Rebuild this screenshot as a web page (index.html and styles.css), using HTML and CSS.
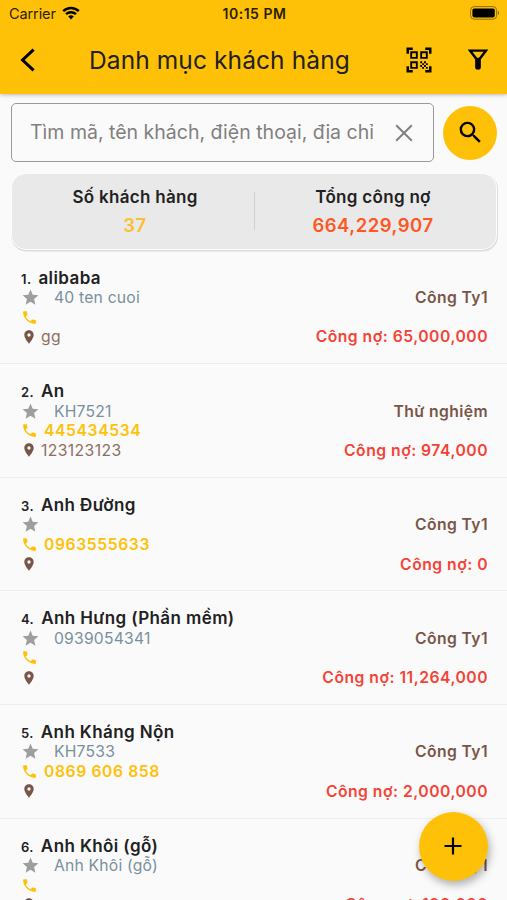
FILE: index.html
```html
<!DOCTYPE html>
<html lang="vi">
<head>
    <meta charset="UTF-8">
    <meta name="viewport" content="width=device-width, initial-scale=1.0">
    <title>Danh mục khách hàng</title>
    <link rel="stylesheet" href="styles.css">
</head>
<body>
    <svg class="sprite" aria-hidden="true">
        <symbol id="star" viewBox="0 0 24 24"><path d="M12 17.27L18.18 21l-1.64-7.03L22 9.24l-7.19-.61L12 2 9.19 8.63 2 9.24l5.46 4.73L5.82 21z"/></symbol>
        <symbol id="phone" viewBox="0 0 24 24"><path d="M20 15.5c-1.25 0-2.45-.2-3.57-.57a1 1 0 0 0-1.02.24l-2.2 2.2a15.05 15.05 0 0 1-6.59-6.59l2.2-2.21a.96.96 0 0 0 .25-1A11.36 11.36 0 0 1 8.5 4c0-.55-.45-1-1-1H4c-.55 0-1 .45-1 1 0 9.39 7.61 17 17 17 .55 0 1-.45 1-1v-3.5c0-.55-.45-1-1-1z"/></symbol>
        <symbol id="pin" viewBox="0 0 24 24"><path d="M12 2C8.13 2 5 5.13 5 9c0 5.25 7 13 7 13s7-7.75 7-13c0-3.87-3.13-7-7-7zm0 9.5a2.5 2.5 0 0 1 0-5 2.5 2.5 0 0 1 0 5z"/></symbol>
    </svg>

    <header>
        <div class="status-bar">
            <div class="carrier">
                <span>Carrier</span>
                <svg class="wifi" viewBox="0 0 18 14">
                    <path d="M1.2 5.2a11.2 11.2 0 0 1 15.6 0" />
                    <path d="M4 8.2a7.2 7.2 0 0 1 10 0" />
                    <path class="wifi-dot" d="M9 13.6l-2.8-3a4.2 4.2 0 0 1 5.6 0z" />
                </svg>
            </div>
            <div class="clock">10:15 PM</div>
            <svg class="battery" viewBox="0 0 30 14">
                <rect class="battery-case" x=".6" y=".6" width="26" height="12.6" rx="3.6" />
                <rect x="2.4" y="2.4" width="22.4" height="9" rx="1.8" />
                <path class="battery-tip" d="M27.8 4.8c1.8.6 1.8 3.6 0 4.2z" />
            </svg>
        </div>
        <div class="app-bar">
            <svg class="back" viewBox="0 0 16 24"><path d="M13.6 1.6L2.6 12l11 10.4" /></svg>
            <h1>Danh mục khách hàng</h1>
            <svg class="qr" viewBox="0 0 24 24"><path d="M9.5 6.5v3h-3v-3h3M11 5H5v6h6V5zm-1.5 9.5v3h-3v-3h3M11 13H5v6h6v-6zm6.5-6.5v3h-3v-3h3M19 5h-6v6h6V5zm-6 8h1.5v1.5H13V13zm1.5 1.5H16V16h-1.5v-1.5zM16 13h1.5v1.5H16V13zm-3 3h1.5v1.5H13V16zm1.5 1.5H16V19h-1.5v-1.5zM16 16h1.5v1.5H16V16zm1.5-1.5H19V16h-1.5v-1.5zm0 3H19V19h-1.5v-1.5zM22 7h-2V4h-3V2h5v5zm0 15v-5h-2v3h-3v2h5zM2 22h5v-2H4v-3H2v5zM2 2v5h2V4h3V2H2z"/></svg>
            <svg class="filter" viewBox="0 0 20 21"><path d="M2 1.6h16l-6.4 8.3v8.3q0 1-1 1H9.400q-1 0-1-1V9.900z" /><path d="M9 10h2v9H9z" /></svg>
        </div>
    </header>

    <div class="search-row">
        <div class="search-box">
            <input type="text" class="search-input" placeholder="Tìm mã, tên khách, điện thoại, địa chỉ">
            <svg class="clear" viewBox="0 0 18 18"><path d="M1.2 1.2l15.6 15.6M16.8 1.2L1.2 16.8" /></svg>
        </div>
        <button class="search-button" aria-label="Tìm">
            <svg viewBox="0 0 24 24"><path d="M15.5 14h-.79l-.28-.27A6.47 6.47 0 0 0 16 9.5 6.5 6.5 0 1 0 9.5 16c1.61 0 3.09-.59 4.23-1.57l.27.28v.79l5 4.99L20.49 19l-4.99-5zm-6 0C7.01 14 5 11.99 5 9.5S7.01 5 9.5 5 14 7.01 14 9.5 11.99 14 9.5 14z"/></svg>
        </button>
    </div>

    <div class="summary">
        <div class="summary-item">
            <div>Số khách hàng</div>
            <div class="summary-count">37</div>
        </div>
        <div class="summary-item">
            <div>Tổng công nợ</div>
            <div class="summary-debt">664,229,907</div>
        </div>
    </div>

    <div class="customers">
        <div class="customer">
            <div class="name"><span class="index">1.</span>alibaba</div>
            <div class="line"><svg class="star"><use href="#star"/></svg><span class="code">40 ten cuoi</span><span class="group">Công Ty1</span></div>
            <div class="line"><svg class="phone"><use href="#phone"/></svg></div>
            <div class="line"><svg class="pin"><use href="#pin"/></svg><span class="address">gg</span><span class="debt">Công nợ: 65,000,000</span></div>
        </div>
        <div class="customer">
            <div class="name"><span class="index">2.</span>An</div>
            <div class="line"><svg class="star"><use href="#star"/></svg><span class="code">KH7521</span><span class="group">Thử nghiệm</span></div>
            <div class="line"><svg class="phone"><use href="#phone"/></svg><span class="tel">445434534</span></div>
            <div class="line"><svg class="pin"><use href="#pin"/></svg><span class="address">123123123</span><span class="debt">Công nợ: 974,000</span></div>
        </div>
        <div class="customer">
            <div class="name"><span class="index">3.</span>Anh Đường</div>
            <div class="line"><svg class="star"><use href="#star"/></svg><span class="group">Công Ty1</span></div>
            <div class="line"><svg class="phone"><use href="#phone"/></svg><span class="tel">0963555633</span></div>
            <div class="line"><svg class="pin"><use href="#pin"/></svg><span class="debt">Công nợ: 0</span></div>
        </div>
        <div class="customer">
            <div class="name"><span class="index">4.</span>Anh Hưng (Phần mềm)</div>
            <div class="line"><svg class="star"><use href="#star"/></svg><span class="code">0939054341</span><span class="group">Công Ty1</span></div>
            <div class="line"><svg class="phone"><use href="#phone"/></svg></div>
            <div class="line"><svg class="pin"><use href="#pin"/></svg><span class="debt">Công nợ: 11,264,000</span></div>
        </div>
        <div class="customer">
            <div class="name"><span class="index">5.</span>Anh Kháng Nộn</div>
            <div class="line"><svg class="star"><use href="#star"/></svg><span class="code">KH7533</span><span class="group">Công Ty1</span></div>
            <div class="line"><svg class="phone"><use href="#phone"/></svg><span class="tel">0869 606 858</span></div>
            <div class="line"><svg class="pin"><use href="#pin"/></svg><span class="debt">Công nợ: 2,000,000</span></div>
        </div>
        <div class="customer">
            <div class="name"><span class="index">6.</span>Anh Khôi (gỗ)</div>
            <div class="line"><svg class="star"><use href="#star"/></svg><span class="code">Anh Khôi (gỗ)</span><span class="group">Công Ty1</span></div>
            <div class="line"><svg class="phone"><use href="#phone"/></svg></div>
            <div class="line"><svg class="pin"><use href="#pin"/></svg><span class="debt">Công nợ: 100,000</span></div>
        </div>
    </div>

    <button class="add-button" aria-label="Thêm">
        <svg viewBox="0 0 18 18"><path d="M9 .5v17M.5 9h17" /></svg>
    </button>
</body>
</html>
```
FILE: styles.css
```css
:root {
    --primary: #ffc107;
    --text: #212121;
    --brown: #795548;
    --blue-grey: #78909c;
    --red: #f44336;
    --background: #fafafa;
}

* {
    margin: 0;
    padding: 0;
    box-sizing: border-box;
    font-family: Inter, Roboto, sans-serif;
}

body {
    height: 900px;
    overflow: hidden;
    background-color: var(--background);
    color: var(--text);
}

svg {
    flex-shrink: 0;
}

.sprite {
    display: none;
}

header {
    height: 94px;
    background-color: var(--primary);
    box-shadow: 0 1px 4px rgba(0, 0, 0, 0.25);
}

.status-bar {
    display: grid;
    grid-template-columns: 1fr auto 1fr;
    align-items: center;
    height: 27px;
    padding: 0 7px 0 9px;
    font-size: 14.5px;
    color: #2b2000;
}

.carrier {
    display: flex;
    align-items: center;
    gap: 6px;
    letter-spacing: -0.1px;
}

.wifi {
    width: 18px;
    height: 14px;
    margin-bottom: 2px;
    fill: none;
    stroke: #000;
    stroke-width: 2.5;
}

.wifi .wifi-dot {
    fill: #000;
    stroke: none;
}

.clock {
    font-size: 14px;
    font-weight: 600;
    letter-spacing: 0.5px;
}

.battery {
    width: 30px;
    height: 14px;
    justify-self: end;
    margin-bottom: 1px;
}

.battery-case {
    fill: none;
    stroke: #8f6d08;
    stroke-width: 1;
}

.battery-tip {
    fill: #8f6d08;
}

.app-bar {
    display: flex;
    align-items: center;
    height: 65px;
    padding: 0 19px 0 20px;
}

.back {
    width: 16px;
    height: 24px;
    fill: none;
    stroke: #000;
    stroke-width: 3;
}

h1 {
    flex: 1;
    margin-left: 53px;
    font-size: 24.5px;
    font-weight: 400;
    letter-spacing: 0.1px;
    white-space: nowrap;
}

.qr {
    width: 30px;
    height: 30px;
    margin-right: 34px;
}

.filter {
    width: 20px;
    height: 21px;
    fill: none;
    stroke: #000;
    stroke-width: 2.4;
}

.search-row {
    display: flex;
    align-items: center;
    gap: 9px;
    padding: 9px 10px 0 11px;
}

.search-box {
    flex: 1;
    display: flex;
    align-items: center;
    height: 59px;
    padding: 0 20px 0 18px;
    border: 1px solid #999;
    border-radius: 5px;
}

.search-input {
    flex: 1;
    min-width: 0;
    padding-bottom: 2px;
    border: none;
    outline: none;
    background: none;
    font-size: 19.5px;
}

.search-input::placeholder {
    color: #808080;
}

.clear {
    width: 18px;
    height: 18px;
    fill: none;
    stroke: #808080;
    stroke-width: 2;
}

.search-button,
.add-button {
    display: flex;
    align-items: center;
    justify-content: center;
    border: none;
    border-radius: 50%;
    background-color: var(--primary);
}

.search-button {
    width: 54px;
    height: 54px;
}

.search-button svg {
    width: 29px;
    height: 29px;
}

.summary {
    display: flex;
    align-items: center;
    height: 75px;
    margin: 12px 11px 0 12px;
    padding-bottom: 2px;
    background-color: #e9e9e9;
    border-radius: 14px;
    box-shadow: 0 0 0 1px #fdfdfd, 0.5px 1px 0 1.5px #dcdcdc;
}

.summary-item {
    flex: 1;
    text-align: center;
    font-size: 17px;
    font-weight: 600;
    line-height: 28px;
    letter-spacing: 0.3px;
}

.summary-item:first-child {
    padding-left: 4px;
}

.summary-item + .summary-item {
    position: relative;
    padding-right: 4px;
}

.summary-item + .summary-item::before {
    content: "";
    position: absolute;
    left: 0;
    top: 9px;
    width: 1px;
    height: 38px;
    background-color: #d0d0d0;
}

.summary-count,
.summary-debt {
    font-size: 18.5px;
    letter-spacing: 0.5px;
}

.summary-count {
    color: #fbc02d;
}

.summary-debt {
    color: #ff5722;
}

.customers {
    margin-top: 1.6px;
}

.customer {
    height: 113.6px;
    padding: 17px 19px 0 21px;
    border-bottom: 1px solid #eee;
}

.name {
    height: 20px;
    font-size: 17px;
    font-weight: 600;
    line-height: 20px;
    letter-spacing: 0.4px;
    white-space: nowrap;
}

.index {
    margin-right: 7px;
    font-size: 13px;
}

.line {
    display: flex;
    align-items: center;
    height: 19.7px;
    font-size: 15.7px;
    letter-spacing: 0.2px;
    white-space: nowrap;
}

.star {
    width: 19px;
    height: 19px;
    fill: #9e9e9e;
}

.phone {
    width: 17px;
    height: 17px;
    fill: var(--primary);
}

.pin {
    width: 16px;
    height: 16px;
    fill: var(--brown);
}

.code {
    margin-left: 14px;
    color: var(--blue-grey);
}

.tel {
    margin-left: 6px;
    font-weight: 600;
    letter-spacing: 0.6px;
    color: var(--primary);
}

.address {
    margin-left: 4px;
    letter-spacing: 0.4px;
    color: #8d6e63;
}

.group,
.debt {
    margin-left: auto;
    font-weight: 600;
}

.group {
    letter-spacing: 0.4px;
    color: var(--brown);
}

.debt {
    letter-spacing: 0.5px;
    color: var(--red);
}

.add-button {
    position: fixed;
    right: 19px;
    bottom: 19px;
    width: 69px;
    height: 69px;
    padding: 0 1px 1px 0;
    box-shadow: 2px 4px 9px rgba(0, 0, 0, 0.3);
}

.add-button svg {
    width: 18px;
    height: 18px;
    stroke: #000;
    stroke-width: 2.2;
}
```
